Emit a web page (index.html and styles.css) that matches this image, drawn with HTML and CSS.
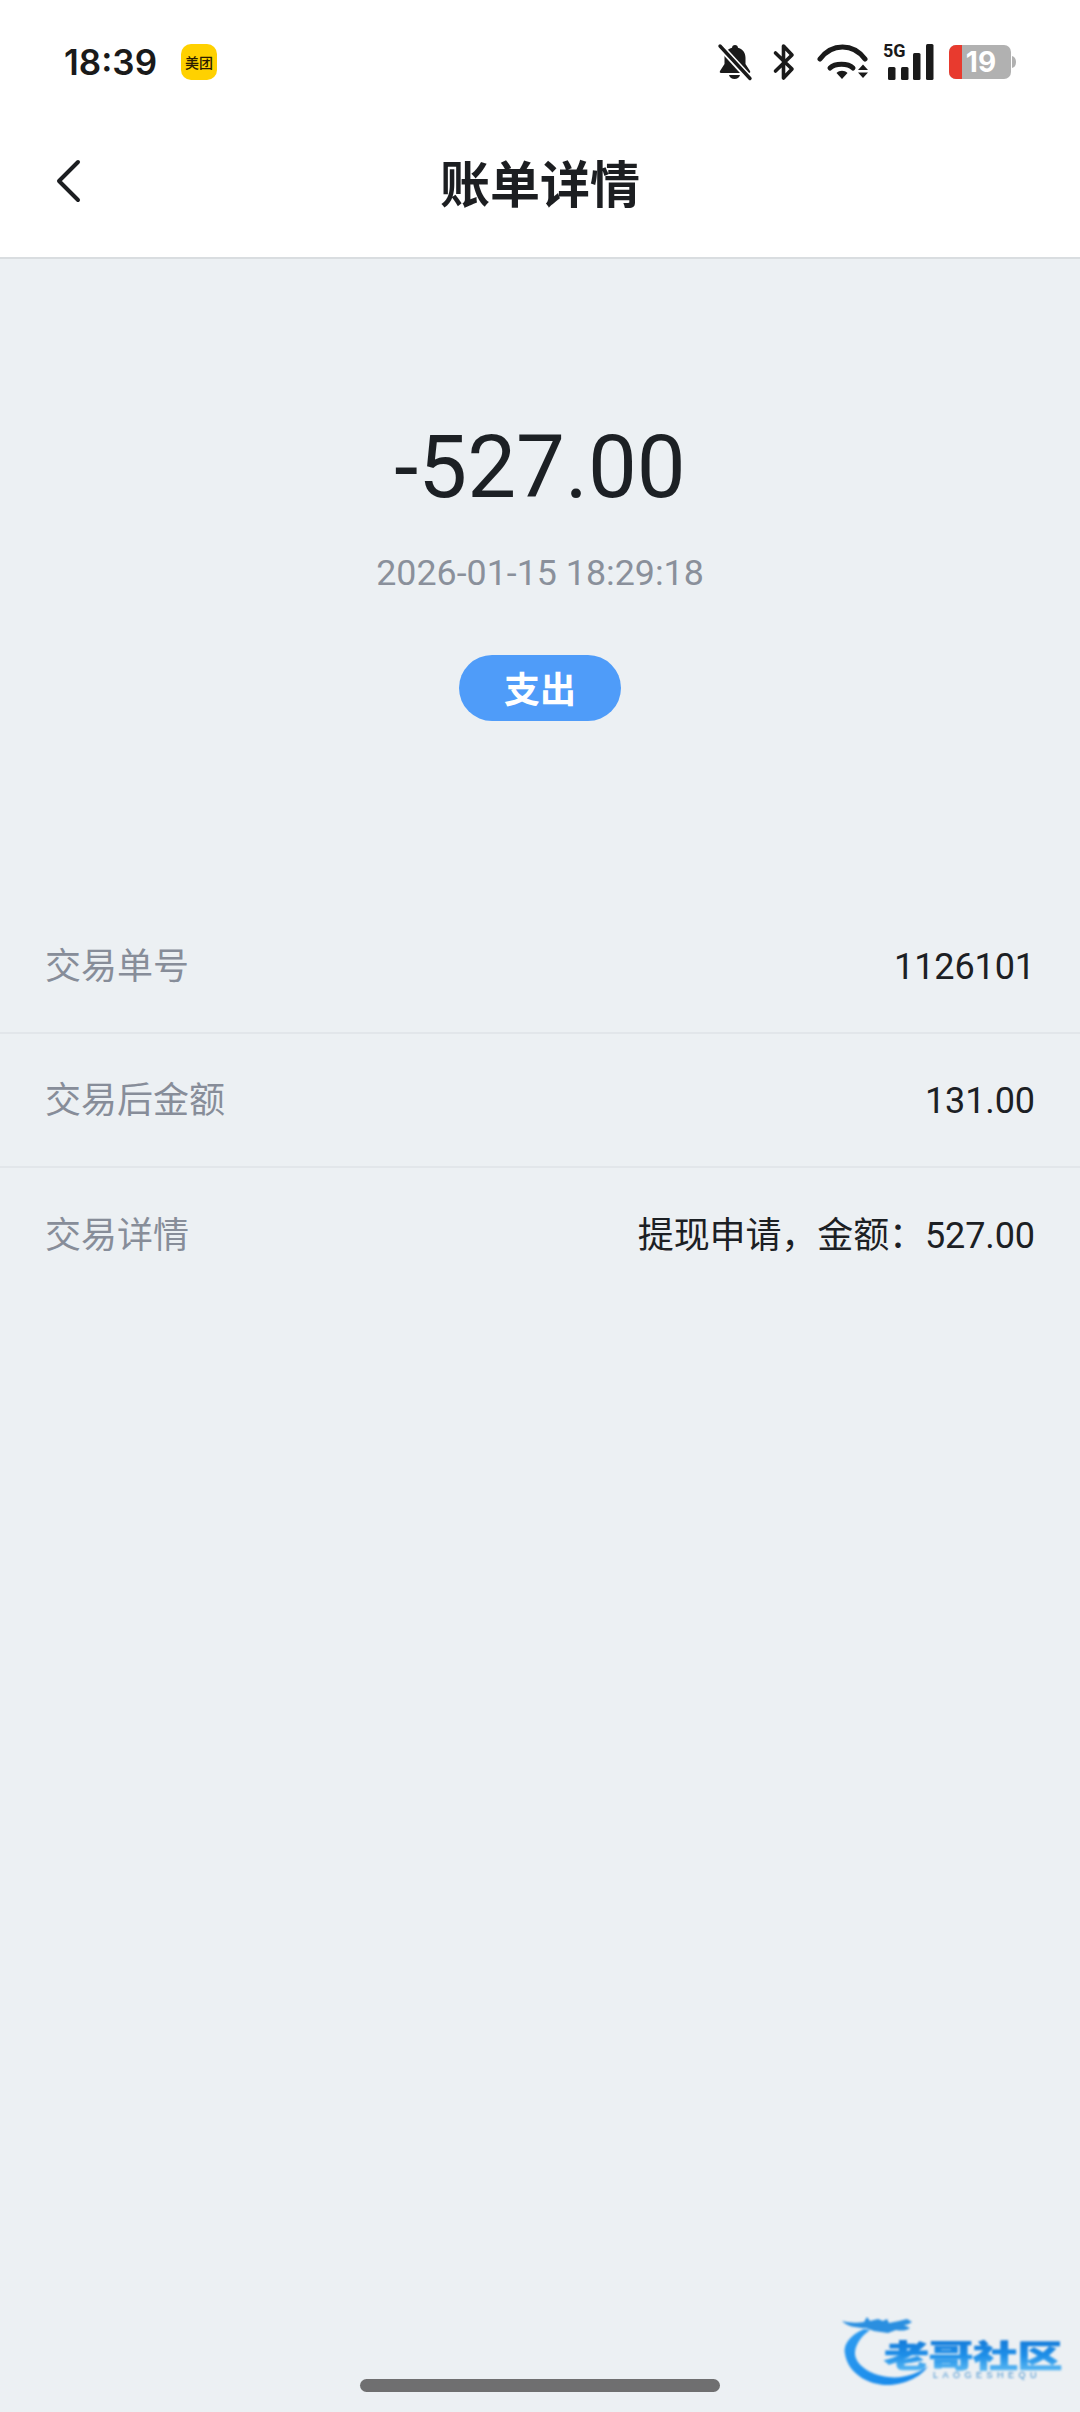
FILE: index.html
```html
<!DOCTYPE html>
<html lang="zh-CN">

<head>
  <meta charset="UTF-8">
  <meta name="viewport" content="width=device-width, initial-scale=1.0">
  <title>账单详情</title>
  <link rel="stylesheet" href="styles.css">
</head>

<body>
  <div class="page">
    <div class="top">
      <div class="status">
        <div class="status-left">
          <span class="clock">18:39</span>
          <i class="app-badge">美团</i>
        </div>
        <div class="status-right">
          <svg class="ic-bell" width="34" height="38" viewBox="0 0 34 38">
            <path d="M17 2c-1.800 0-3 1.200-3 2.800C8 6.500 6.500 11 6.500 15v6L2 28c-.6 1 0 2 1 2h28c1 0 1.600-1 1-2l-4.500-7v-6C27.500 11 26 6.500 20 4.800 20 3.200 18.800 2 17 2z" fill="#1a1a1a"/>
            <path d="M1 2 33 37" stroke="#fff" stroke-width="7"/>
            <path d="M2 3 32 35.500" stroke="#1a1a1a" stroke-width="3.400" stroke-linecap="round"/>
            <path d="M11 32h11c-.6 2.400-2.900 4-5.500 4S11.600 34.400 11 32z" fill="#1a1a1a"/>
          </svg>
          <svg class="ic-bt" width="22" height="38" viewBox="0 0 22 38">
            <path d="M2.500 10 19 26 10.500 35V3L19 12 2.500 28" fill="none" stroke="#1a1a1a" stroke-width="3.600" stroke-linejoin="round" stroke-linecap="round"/>
          </svg>
          <svg class="ic-wifi" width="52" height="36" viewBox="0 0 52 36">
            <g fill="none" stroke="#1a1a1a" stroke-width="5" stroke-linecap="round">
              <path d="M3 15C15-1 36-1 48 15"/>
              <path d="M13 24C18 19 31 19 36 24"/>
            </g>
            <path d="M19.500 29c3-3 8-3 11 0L25 35z" fill="#1a1a1a"/>
            <path d="M41 26h10l-5-5.500zM41 28.500h10L46 34z" fill="#1a1a1a"/>
          </svg>
          <svg class="ic-signal" width="52" height="38" viewBox="0 0 52 38">
            <text class="ic-5g" x="1" y="14">5G</text>
            <rect x="6" y="24" width="7.500" height="13" rx="1.500"/>
            <rect x="19" y="24" width="7.500" height="13" rx="1.500"/>
            <rect x="31" y="10" width="7.500" height="27" rx="1.500"/>
            <rect x="44" y="1" width="7.500" height="36" rx="1.500"/>
          </svg>
          <svg class="ic-batt" width="67" height="36" viewBox="0 0 67 36">
            <rect x="0" y="1" width="62" height="34" rx="7" fill="#b1b1b1"/>
            <path d="M7 1h6v34H7a7 7 0 0 1-7-7V8a7 7 0 0 1 7-7z" fill="#e83a2e"/>
            <path d="M63 12c2.500.5 4 2.500 4 6s-1.500 5.500-4 6z" fill="#b1b1b1"/>
            <text class="ic-level" x="32" y="28" text-anchor="middle">19</text>
          </svg>
        </div>
      </div>
      <div class="nav">
        <svg class="back" width="28" height="44" viewBox="0 0 28 44">
          <path d="M24 3 5 22l19 19" fill="none" stroke="#1c1e21" stroke-width="4" stroke-linecap="round" stroke-linejoin="round"/>
        </svg>
        <h1 class="title">账单详情</h1>
      </div>
    </div>

    <div class="summary">
      <p class="amount">-527.00</p>
      <p class="date">2026-01-15 18:29:18</p>
      <span class="tag">支出</span>
    </div>

    <div class="list">
      <div class="row">
        <span class="label">交易单号</span>
        <span class="value">1126101</span>
      </div>
      <div class="row">
        <span class="label">交易后金额</span>
        <span class="value">131.00</span>
      </div>
      <div class="row">
        <span class="label">交易详情</span>
        <span class="value">提现申请，金额：527.00</span>
      </div>
    </div>

    <div class="home">
      <i class="home-bar"></i>
    </div>

    <svg class="mark" width="230" height="74" viewBox="0 0 230 74">
      <defs>
        <linearGradient id="markBlue" x1="0" y1="0" x2="0" y2="1">
          <stop offset="0" stop-color="#0f6fd0"/>
          <stop offset="0.55" stop-color="#1e8fe8"/>
          <stop offset="1" stop-color="#6cc4f6"/>
        </linearGradient>
        <linearGradient id="markArc" x1="0" y1="0" x2="1" y2="1">
          <stop offset="0" stop-color="#2f9cf0"/>
          <stop offset="1" stop-color="#1487ea"/>
        </linearGradient>
      </defs>
      <g class="mark-art">
        <path d="M24 13C8 20 3 30 5 38c3 20 25 32 45 31 16-1 32-9 38-19-10 8-26 13-40 11C30 59 14 48 15 36c1-10 9-18 15-22z" fill="url(#markArc)"/>
        <path d="M2 5c8 2 15 2 22 1l3-5 3 4 8-2 5 2 4-2 2 4 10-2 8-2 5 3c-3 2-5 3-8 3l6 3c-4 3-9 3-14 2l-8 3-14-2-8-3C15 12 7 10 2 5z" fill="#2b8fe0"/>
        <g transform="translate(44 51) scale(1 .68)">
          <text class="mark-name" x="0" y="0" fill="url(#markBlue)" stroke="url(#markBlue)">老哥社区</text>
        </g>
        <text class="mark-sub" x="93" y="62">LAOGESHEQU</text>
      </g>
    </svg>
  </div>
</body>

</html>
```

FILE: styles.css
```css
* {
  box-sizing: border-box;
}

body {
  margin: 0;
  background: #ecf0f3;
  font-family: Roboto, "Noto Sans CJK SC", sans-serif;
}

.page {
  position: relative;
  width: 1080px;
  height: 2412px;
  display: flex;
  flex-direction: column;
  overflow: hidden;
}

.top {
  background: #fff;
  border-bottom: 2px solid #d9dde0;
  height: 259px;
}

.status {
  height: 124px;
  padding: 0 64px;
  display: flex;
  justify-content: space-between;
  align-items: center;
}

.status-left {
  display: flex;
  align-items: center;
  gap: 24px;
}

.clock {
  font-family: Inter, Roboto, sans-serif;
  font-size: 35px;
  font-weight: 600;
  color: #1a1a1a;
}

.app-badge {
  width: 36px;
  height: 36px;
  border-radius: 10px;
  background: #ffd100;
  color: #2a1c00;
  font-family: "Noto Sans CJK SC", sans-serif;
  font-style: normal;
  font-size: 14px;
  font-weight: 500;
  line-height: 36px;
  text-align: center;
}

.status-right {
  display: flex;
  align-items: center;
  gap: 13px;
}

.status-right svg {
  overflow: visible;
}

.ic-bell {
  margin-right: 8px;
}

.ic-bt {
  margin-right: 9px;
}

.ic-signal {
  margin-right: 2px;
}

.ic-signal rect {
  fill: #1a1a1a;
}

.ic-5g {
  font-family: Roboto, sans-serif;
  font-size: 18px;
  font-weight: 700;
  fill: #1a1a1a;
}

.ic-level {
  font-family: Inter, Roboto, sans-serif;
  font-size: 28px;
  font-weight: 700;
  fill: #fff;
}

.nav {
  position: relative;
  height: 114px;
  display: flex;
  align-items: center;
  justify-content: center;
}

.back {
  position: absolute;
  left: 54px;
  top: 35px;
}

.title {
  margin: 0;
  font-family: "Noto Sans CJK SC", sans-serif;
  font-size: 50px;
  font-weight: 700;
  color: #1c1e21;
}

.summary {
  display: flex;
  flex-direction: column;
  align-items: center;
  padding-top: 156px;
}

.amount {
  margin: 0;
  font-size: 87px;
  line-height: 104px;
  color: #1c2024;
}

.date {
  margin: 32px 0 0;
  font-size: 35.800px;
  line-height: 44px;
  color: #8a909b;
}

.tag {
  margin-top: 60px;
  width: 162px;
  height: 66px;
  border-radius: 33px;
  background: #4f9cf9;
  color: #fff;
  font-family: "Noto Sans CJK SC", sans-serif;
  font-size: 36px;
  font-weight: 700;
  line-height: 64px;
  text-align: center;
}

.list {
  margin-top: 179px;
  flex: 1;
}

.row {
  height: 134px;
  display: flex;
  justify-content: space-between;
  align-items: center;
  padding: 2px 45px 0;
  font-size: 36px;
  line-height: 44px;
  border-bottom: 2px solid #e2e6ea;
}

.row:last-child {
  border-bottom: none;
}

.label {
  color: #878d99;
}

.value {
  color: #1c2024;
  letter-spacing: -0.1px;
}

.home {
  display: flex;
  justify-content: center;
  padding-bottom: 20px;
}

.home-bar {
  width: 360px;
  height: 13px;
  border-radius: 7px;
  background: #6f6f70;
}

.mark {
  position: absolute;
  left: 840px;
  top: 2316px;
}

.mark-art {
  filter: blur(0.8px);
}

.mark-name {
  font-family: "Noto Sans CJK SC", sans-serif;
  font-size: 45px;
  font-weight: 900;
  letter-spacing: -0.5px;
  stroke-width: 1px;
}

.mark-sub {
  font-family: "Liberation Sans", sans-serif;
  font-size: 9px;
  letter-spacing: 4.500px;
  fill: #3f8ecf;
}
```
